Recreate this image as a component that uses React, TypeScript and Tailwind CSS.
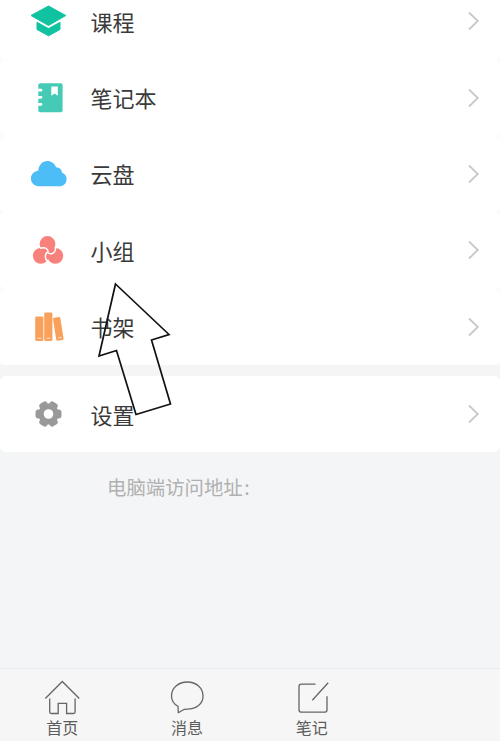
import React from 'react';

interface RowProps {
  label: string;
  icon: React.ReactNode;
}

const Chevron: React.FC = () => (
  <svg className="w-3 h-5" viewBox="0 0 12 20" fill="none" stroke="#c8c8c8" strokeWidth="1.8">
    <path d="M1 1.5 9.8 10 1 18.5" />
  </svg>
);

const MenuRow: React.FC<RowProps> = ({ label, icon }) => (
  <div className="h-[76.4px] shrink-0 bg-white rounded-md flex items-center pl-7 pr-5">
    <div className="size-10 shrink-0">{icon}</div>
    <span className="ml-[22.5px] mb-[1px] flex-1 text-[22px] leading-8 text-[#3a3a3a]">{label}</span>
    <Chevron />
  </div>
);

const CourseIcon = () => (
  <svg className="size-10" viewBox="0 0 40 40" fill="#10c3a0" stroke="#10c3a0" strokeLinejoin="round">
    <path d="M3 14.5 20.5 5l17.3 9.5-17.3 10z" />
    <path d="M9 21.3l11.5 6.3L32 21.3v7.2l-11.5 6.3L9 28.5z" />
  </svg>
);

const NotebookIcon = () => (
  <svg className="size-10" viewBox="0 0 40 40">
    <rect x="10.3" y="5.3" width="24.3" height="29" rx="2" fill="#45cbb5" />
    <path d="M9.5 12.2h3.5M9.5 19.3h3.5M9.5 26.4h3.5" stroke="#fff" strokeWidth="2.8" strokeLinecap="round" />
    <path d="M23.3 8.5h6.5v9.3l-3.2-2.2-3.3 2.2z" fill="#fff" />
  </svg>
);

const CloudIcon = () => (
  <svg className="size-10" viewBox="0 0 40 40" fill="#4dbdf8">
    <path d="M11 32.2a7.7 7.7 0 0 1-.8-15.4C10.8 11 14.400 7 19.200 7c4.200 0 7.300 2.300 8.800 6.200 3.700.1 6 2.400 6.100 5.600 3 1.200 4.500 3.400 4.500 6.100 0 4.200-3 7.300-7 7.300z" />
  </svg>
);

const GroupIcon = () => (
  <svg className="size-10" viewBox="0 0 40 40" fill="#f9817c">
    <circle cx="19.5" cy="14" r="7.900" />
    <circle cx="12.8" cy="25.8" r="7.900" />
    <circle cx="27.3" cy="25.8" r="7.900" />
    <path d="M12 18.2c4.500-1.300 8 0 8.200 3.600M27.600 18c.1 4.300-3.200 7.300-7.600 4.800M19.700 31.500c-3.200-2.500-3.200-7.800.5-10" fill="none" stroke="#fff" strokeWidth="1.5" />
  </svg>
);

const BooksIcon = () => (
  <svg className="size-10" viewBox="0 0 40 40" fill="#f9a05b">
    <rect x="7.2" y="9.4" width="8.2" height="24.500" rx="1.3" />
    <rect x="16.2" y="5.600" width="8.2" height="28.300" rx="1.3" />
    <rect x="26.6" y="10.300" width="7.400" height="23.300" rx="1.3" transform="rotate(-9 30.2 22)" />
    <path d="M9.500 31.200h3.800M18.500 31.200h3.800M30.200 30.900l3.300-.5" stroke="#fde0c8" />
  </svg>
);

const GearIcon = () => (
  <svg className="size-10" viewBox="0 0 40 40">
    <circle cx="20.5" cy="20" r="10.4" fill="#999999" />
    <path
      d="M10.500 18.600v2.800M30.500 18.600v2.800M14.300 12l2.500-1.500M26.700 28l-2.500 1.500M26.700 12l-2.500-1.500M14.300 28l2.500 1.500"
      stroke="#999999"
      strokeWidth="6"
      strokeLinecap="round"
    />
    <circle cx="20.5" cy="20" r="4.800" fill="#fff" />
  </svg>
);

const HomeIcon = () => (
  <svg className="size-9" viewBox="0 0 36 36" fill="none" stroke="#666666" strokeWidth="1.3">
    <path d="M1.300 19.500 18.300 2.500l17 17M5.700 19.500v13.500q0 1.500 1.500 1.500h7V24.300h8.400V34.500h7q1.500 0 1.500-1.500v-13.500" />
  </svg>
);

const MessageIcon = () => (
  <svg className="size-9" viewBox="0 0 36 36" fill="none" stroke="#666666" strokeWidth="1.3" strokeLinejoin="round">
    <path d="M9 27.300C4.700 25 2.500 21.500 2.500 17 2.500 9 9.300 3 18.300 3S34 9 34 17 27.300 30.200 18.300 30.200c-1.400 0-2 0-3 .1l-6 3.400z" />
  </svg>
);

const NoteIcon = () => (
  <svg className="size-9" viewBox="0 0 36 36" fill="none" stroke="#666666" strokeWidth="1.3">
    <path d="M21.500 5.200H7.500Q5 5.200 5 7.700V30.700Q5 33.200 7.500 33.200H30.500Q33 33.200 33 30.700V17.200M18.300 21.200 34.200 3.700" />
  </svg>
);

const menuItems: RowProps[] = [
  { label: '课程', icon: <CourseIcon /> },
  { label: '笔记本', icon: <NotebookIcon /> },
  { label: '云盘', icon: <CloudIcon /> },
  { label: '小组', icon: <GroupIcon /> },
  { label: '书架', icon: <BooksIcon /> },
];

const tabs: RowProps[] = [
  { label: '首页', icon: <HomeIcon /> },
  { label: '消息', icon: <MessageIcon /> },
  { label: '笔记', icon: <NoteIcon /> },
];

const App: React.FC = () => (
  <div className="relative w-full h-[741px] overflow-hidden flex flex-col bg-[#f4f5f7] font-['Noto_Sans_CJK_SC',sans-serif]">
    {/* Menu list, scrolled so the first row is cut off */}
    <div className="-mt-[17px] bg-[#fbfbfb] flex flex-col">
      {menuItems.map((item) => (
        <MenuRow key={item.label} {...item} />
      ))}
    </div>

    <div className="h-[11px] shrink-0 bg-[#f5f5f5]" />
    <MenuRow label="设置" icon={<GearIcon />} />

    <p className="mt-[21px] ml-[107px] text-[19.4px] leading-7 text-[#b0b0b0]">
      电脑端访问地址<span className="ml-[1.5px]">:</span>
    </p>

    {/* Tab bar */}
    <nav className="mt-auto h-[73px] shrink-0 grid grid-cols-4 pr-px bg-[#f6f6f6] border-t border-[#e9ebee]">
      {tabs.map((tab) => (
        <div key={tab.label} className="flex flex-col items-center pt-[10px]">
          {tab.icon}
          <span className="mt-[2px] text-[16px] leading-5 text-[#5c5c5c]">{tab.label}</span>
        </div>
      ))}
    </nav>

    {/* Pointer arrow */}
    <svg className="absolute left-[95px] top-[280px] w-20 h-[140px]" viewBox="0 0 80 140" fill="none" stroke="#111111" strokeWidth="1.7">
      <path d="M20.5 4 74 54.5 56.5 60 75.5 124 41 134.5 21.5 70.5 4 76z" />
    </svg>
  </div>
);

export default App;
